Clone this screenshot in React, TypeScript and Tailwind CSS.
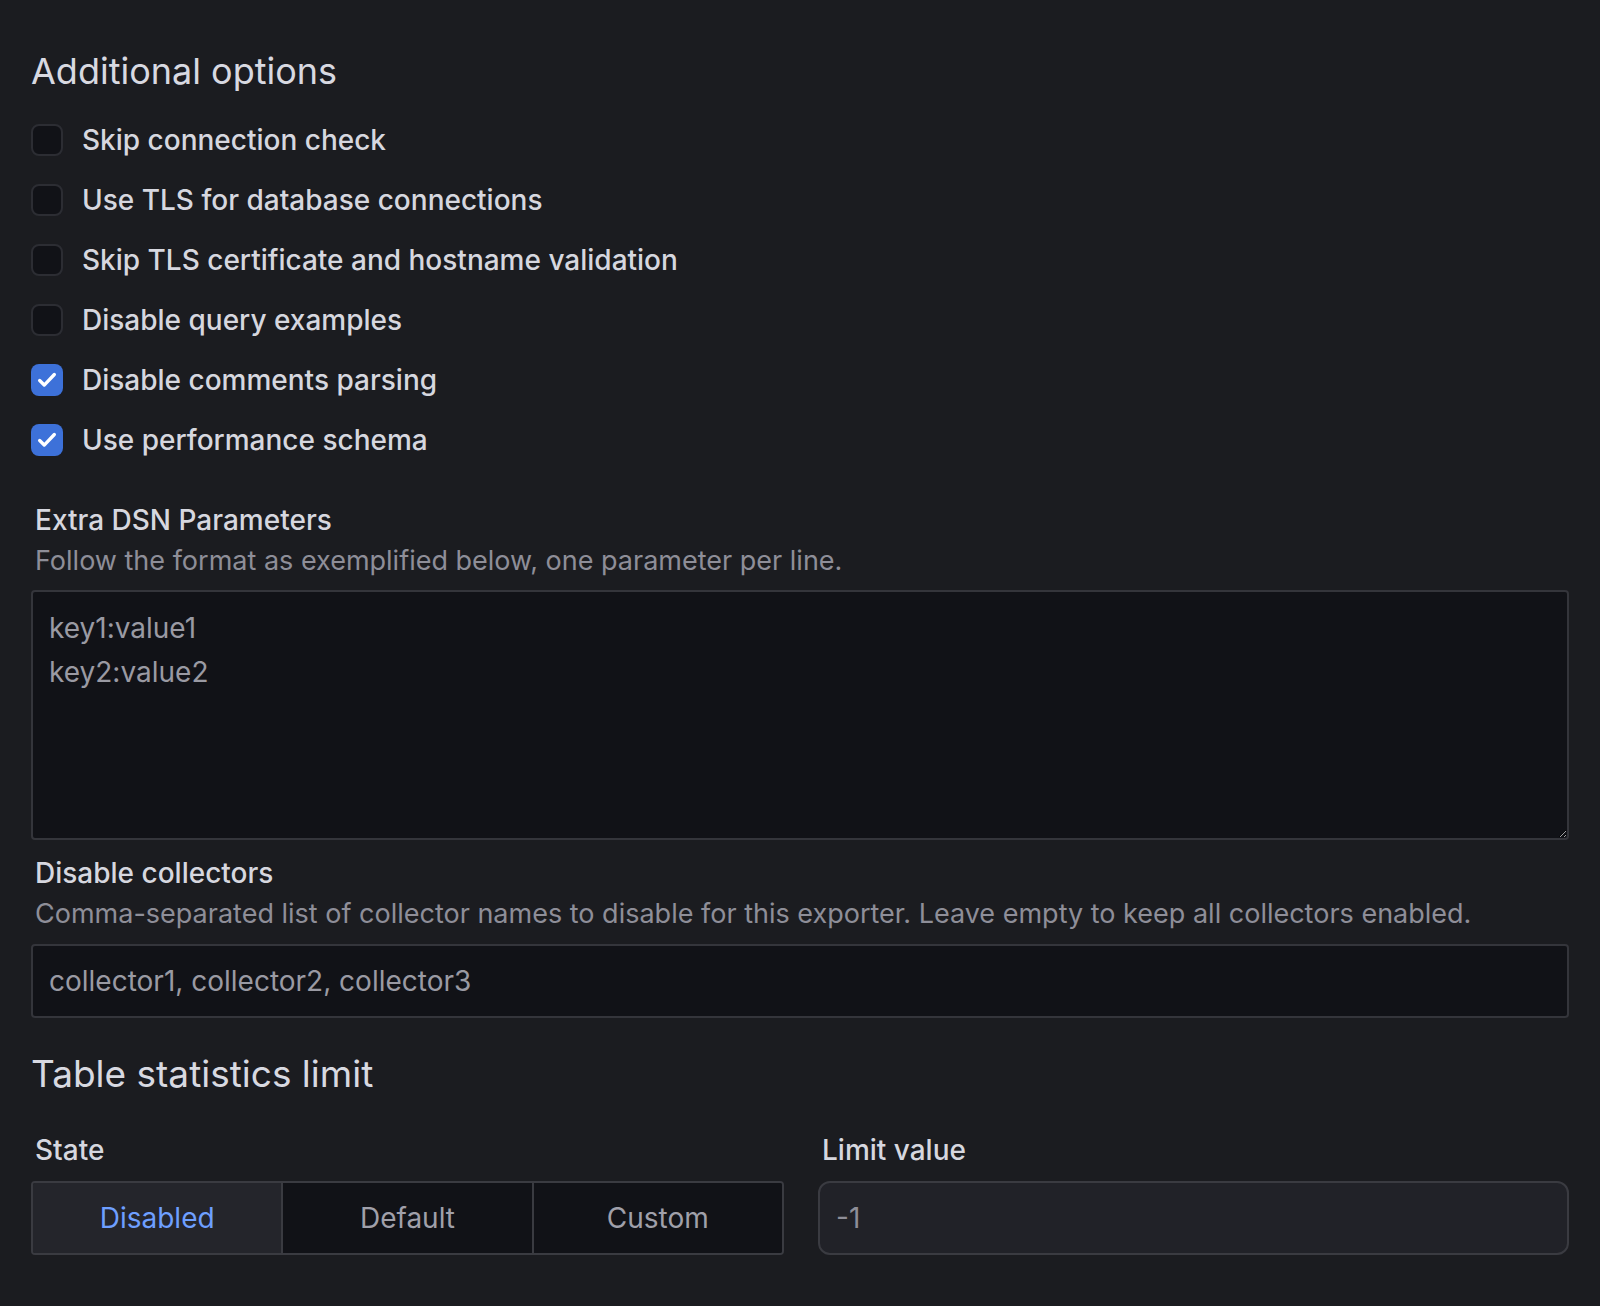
import React from 'react';

const font = { fontFamily: 'Inter, "Noto Sans", sans-serif' };

const options = [
  { label: 'Skip connection check', checked: false },
  { label: 'Use TLS for database connections', checked: false },
  { label: 'Skip TLS certificate and hostname validation', checked: false },
  { label: 'Disable query examples', checked: false },
  { label: 'Disable comments parsing', checked: true },
  { label: 'Use performance schema', checked: true },
];

const Checkbox = ({ checked }: { checked: boolean }) =>
  checked ? (
    <span className="flex h-[32px] w-[32px] shrink-0 items-center justify-center rounded-[8px] bg-[#3d71d9]">
      <svg width="22" height="22" viewBox="0 0 24 24" fill="none">
        <path d="M4 12.5l5 5L20 6" stroke="white" strokeWidth="3.6" strokeLinecap="round" strokeLinejoin="round" />
      </svg>
    </span>
  ) : (
    <span className="h-[32px] w-[32px] shrink-0 rounded-[8px] border-2 border-[#2c2d33] bg-[#111217]" />
  );

export default function App() {
  return (
    <div className="min-h-[1306px] w-[1600px] bg-[#1b1c20] px-[31px] pt-[46px] text-[#ccccdc]" style={font}>
      <h2 className="text-[36px] font-normal leading-[50px] text-[#d8d9e1]">Additional options</h2>

      <div className="mt-[14px] flex flex-col">
        {options.map((o) => (
          <label key={o.label} className="flex h-[60px] items-center gap-[19px]">
            <Checkbox checked={o.checked} />
            <span className="text-[28px] font-medium text-[#d6d7df]">{o.label}</span>
          </label>
        ))}
      </div>

      <div className="mt-[30px] px-[4px]">
        <div className="text-[28px] font-medium leading-[40px] text-[#d6d7df]">Extra DSN Parameters</div>
        <div className="text-[27px] leading-[42px] text-[#8e8e98]">Follow the format as exemplified below, one parameter per line.</div>
      </div>
      <textarea
        className="mt-[8px] block h-[250px] w-full resize-y rounded-[4px] border-2 border-[#34353b] bg-[#111217] px-[16px] py-[14px] text-[28px] leading-[44px] text-[#9a9aa3] outline-none placeholder:text-[#9a9aa3]"
        style={font}
        placeholder={'key1:value1\nkey2:value2'}
      />

      <div className="mt-[12px] px-[4px]">
        <div className="text-[28px] font-medium leading-[42px] text-[#d6d7df]">Disable collectors</div>
        <div className="text-[27px] leading-[40px] text-[#8e8e98]">
          Comma-separated list of collector names to disable for this exporter. Leave empty to keep all collectors enabled.
        </div>
      </div>
      <input
        className="mt-[10px] block h-[74px] w-full rounded-[4px] border-2 border-[#34353b] bg-[#111217] px-[16px] text-[28px] text-[#9a9aa3] outline-none placeholder:text-[#9a9aa3]"
        style={font}
        placeholder="collector1, collector2, collector3"
      />

      <h2 className="mt-[30px] text-[37px] font-normal leading-[52px] text-[#d8d9e1]">Table statistics limit</h2>

      <div className="mt-[30px] flex gap-[34px]">
        <div className="w-[753px]">
          <div className="px-[4px] text-[28px] font-medium leading-[40px] text-[#d6d7df]">State</div>
          <div className="mt-[11px] flex h-[74px] overflow-hidden rounded-[4px] border-2 border-[#3a3b41]">
            <div className="flex flex-1 items-center justify-center bg-[#24252b] text-[28px] text-[#6e9fff]">Disabled</div>
            <div className="flex flex-1 items-center justify-center border-l-2 border-[#3a3b41] bg-[#111217] text-[28px] text-[#a0a0aa]">Default</div>
            <div className="flex flex-1 items-center justify-center border-l-2 border-[#3a3b41] bg-[#111217] text-[28px] text-[#a0a0aa]">Custom</div>
          </div>
        </div>
        <div className="flex-1">
          <div className="px-[4px] text-[28px] font-medium leading-[40px] text-[#d6d7df]">Limit value</div>
          <div className="mt-[11px] flex h-[74px] items-center rounded-[12px] border-2 border-[#3a3b41] bg-[#212228] px-[16px] text-[28px] text-[#8e8e98]">
            -1
          </div>
        </div>
      </div>
    </div>
  );
}
